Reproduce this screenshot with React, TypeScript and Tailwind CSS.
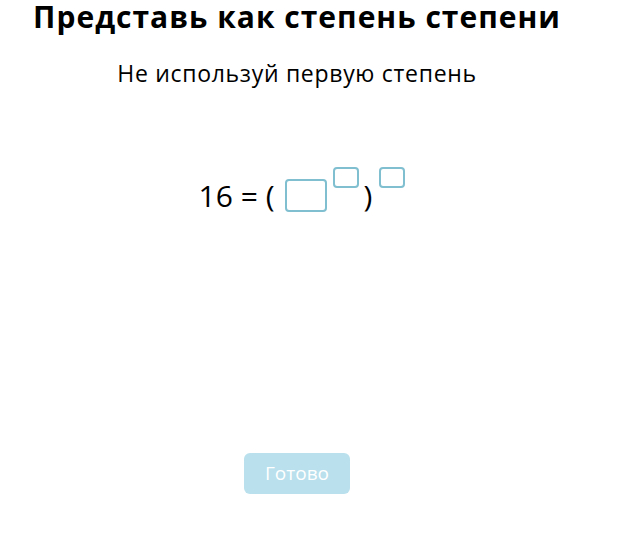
export default function App() {
  return (
    <div className="w-[594px] bg-white text-black" style={{ fontFamily: '"Open Sans", sans-serif' }}>
      <h1 className="text-center text-[30px] font-bold leading-[34px] tracking-[1px]">Представь как степень степени</h1>
      <p className="mt-[24px] text-center text-[23px] leading-[30px] tracking-[0.7px]">Не используй первую степень</p>

      <div className="mt-[79px] flex items-end justify-center pl-[10px]">
        <span className="text-[30px] leading-[40px]">16 = (</span>
        <span className="ml-[10px] mb-[4px] h-[33px] w-[42px] rounded-[4px] border-2 border-[#7fbfcf]" />
        <span className="mb-[28px] ml-[6px] h-[21px] w-[26px] rounded-[4px] border-2 border-[#7fbfcf]" />
        <span className="ml-[5px] text-[30px] leading-[40px]">)</span>
        <span className="mb-[28px] ml-[7px] h-[21px] w-[26px] rounded-[4px] border-2 border-[#7fbfcf]" />
      </div>

      <div className="mt-[237px] flex justify-center">
        <button className="h-[41px] w-[106px] rounded-[6px] bg-[#b9e0ec] text-[19px] text-white">Готово</button>
      </div>
    </div>
  );
}
